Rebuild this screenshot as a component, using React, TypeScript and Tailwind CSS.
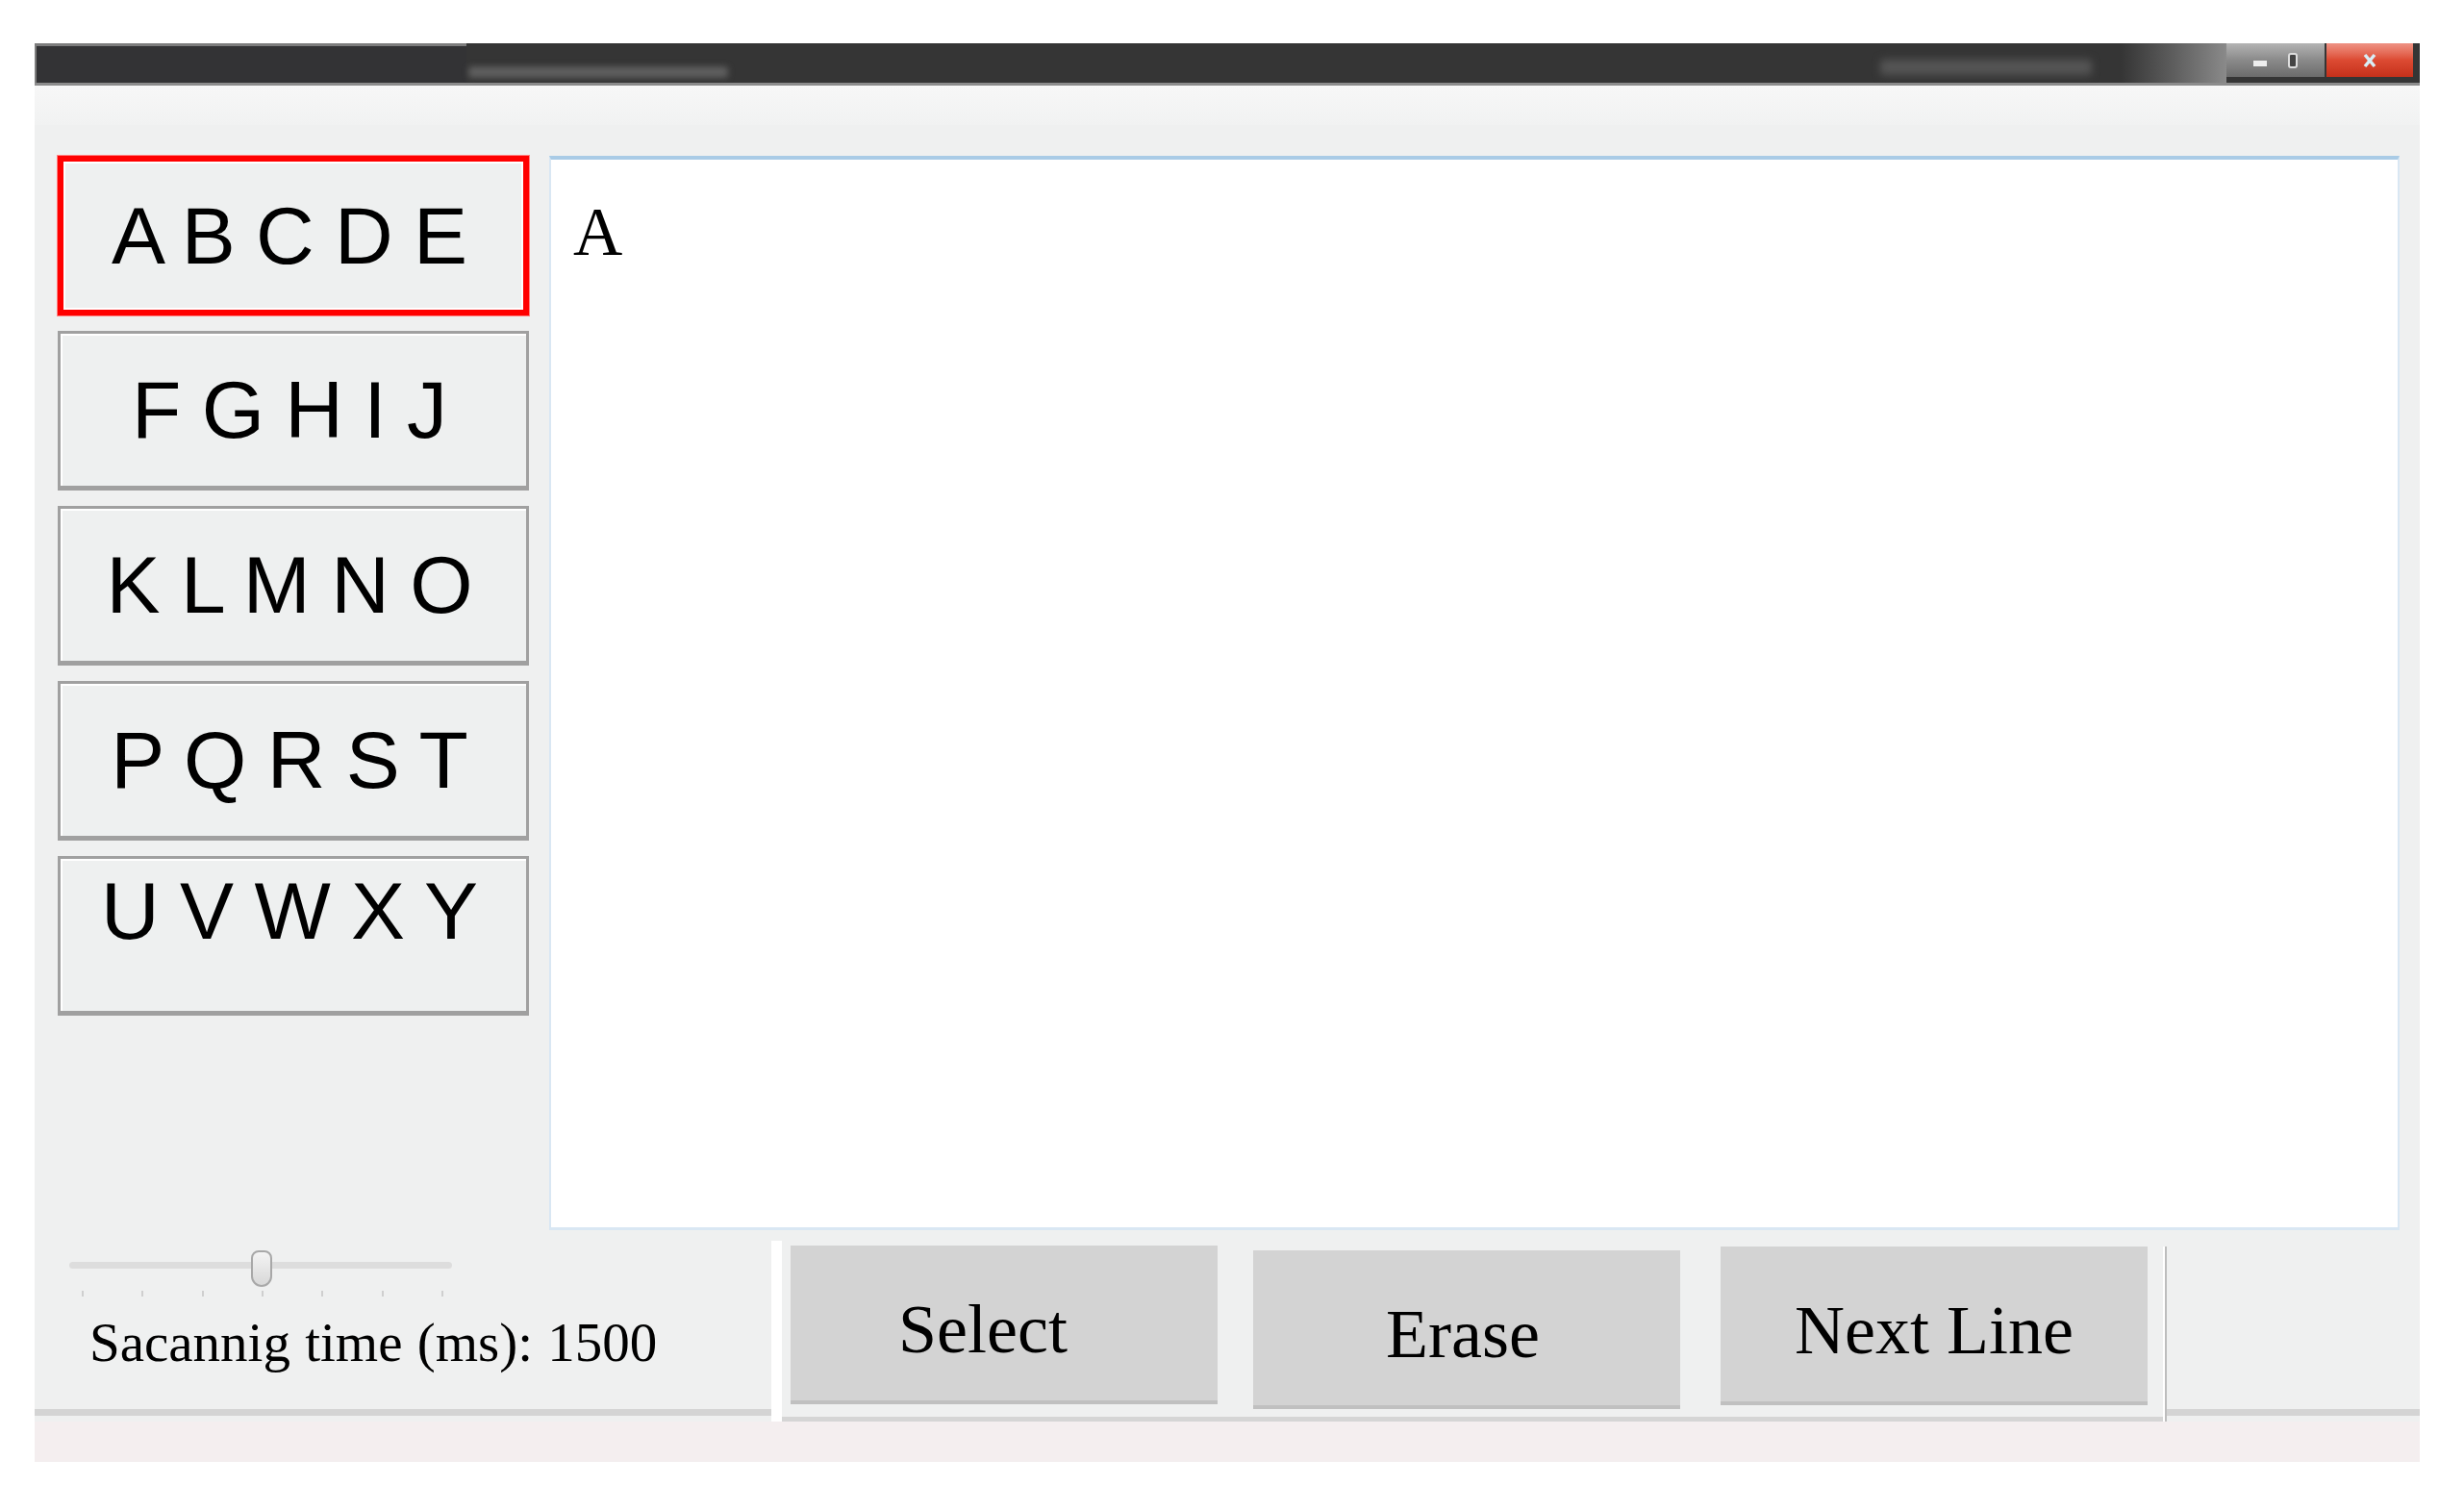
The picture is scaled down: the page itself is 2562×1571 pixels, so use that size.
import React from "react";

const rows = ["A B C D E", "F G H I J", "K L M N O", "P Q R S T", "U V W X Y"];
const ticks = [0, 1, 2, 3, 4, 5, 6];

function TitleBar() {
  return (
    <div className="flex h-[44px] border-b-[3px] border-[#8c8c8c] bg-[#353535]">
      <div className="h-full w-[449px] border-l-2 border-t-[3px] border-[#7d7d7d] bg-[#333335]" />
      <div className="ml-[2px] mt-[24px] h-[12px] w-[270px] rounded-sm bg-[#5e5e5e] blur-[3px]" />
      <div className="flex-1" />
      <div className="mr-[30px] mt-[17px] h-[16px] w-[220px] rounded-sm bg-[#555] blur-[4px]" />
      <div className="h-full w-[110px] bg-gradient-to-r from-[#353535] to-[#8a8a8a]" />
      <div className="flex h-[35px] w-[102px] items-center justify-center gap-[22px] bg-gradient-to-b from-[#b4b4b4] via-[#8a8a8a] to-[#6c6c6c]">
        <div className="mt-[6px] h-[6px] w-[14px] bg-[#eeeeee]" />
        <div className="h-[16px] w-[10px] rounded-[3px] border-2 border-[#dddddd] bg-[#444]" />
      </div>
      <div className="ml-[2px] flex h-[35px] w-[90px] items-center justify-center bg-gradient-to-b from-[#ee9284] via-[#dc4a32] to-[#c5301a]">
        <svg width="14" height="16" viewBox="0 0 14 16">
          <path d="M2 2 L12 14 M12 2 L2 14" stroke="#d8eef6" strokeWidth="3.5" />
        </svg>
      </div>
      <div className="w-[7px]" />
    </div>
  );
}

function LetterBox({ text, active, top }: { text: string; active: boolean; top?: boolean }) {
  return (
    <div
      className={`flex h-[166px] w-[490px] justify-center bg-[#eef0f0] pr-[8px] font-['Liberation_Sans',Arial,sans-serif] text-[84px] leading-none text-black [word-spacing:-2px] ${
        top ? "items-start pt-[12px]" : "items-center"
      } ${
        active
          ? "border-[6px] border-[#ff0000] shadow-[0_0_0_1px_#ff8080,inset_0_0_0_2px_#ffffff]"
          : "border-[3px] border-[#a0a0a0] border-b-[5px] shadow-[inset_2px_2px_0_#ffffff]"
      }`}>
      <span className="whitespace-pre">{text}</span>
    </div>
  );
}

function ActionButton({ label, mt, extra }: { label: string; mt: string; extra?: string }) {
  return (
    <div
      className={`flex h-[165px] w-[444px] items-center justify-center border-b-[4px] border-[#c0c0c0] bg-[#d3d3d3] pt-[12px] font-['Liberation_Serif','Times_New_Roman',serif] text-[72px] leading-none text-black ${mt} ${extra ?? ""}`}>
      {label}
    </div>
  );
}

export default function App() {
  return (
    <div className="h-[1571px] w-[2562px] bg-white pl-[36px] pt-[45px]">
      <div className="flex w-[2480px] flex-col">
        <TitleBar />
        <div className="h-[41px] bg-gradient-to-b from-[#f7f7f7] to-[#f1f2f2]" />
        <div className="flex flex-col bg-[#eff0f0]">
          {/* letters + text */}
          <div className="flex gap-[21px] pl-[24px] pt-[32px]">
            <div className="flex flex-col gap-[16px]">
              {rows.map((r, i) => (
                <LetterBox key={r} text={r} active={i === 0} top={i === 4} />
              ))}
            </div>
            <div className="h-[1117px] w-[1924px] border-x-2 border-b-[3px] border-[#d9e7f3] border-t-[4px] border-t-[#a9cbe6] bg-white pl-[23px] pt-[40px] font-['Liberation_Serif','Times_New_Roman',serif] text-[71px] leading-none text-black">
              A
            </div>
          </div>
          {/* bottom controls */}
          <div className="flex h-[199px]">
            <div className="mb-[6px] flex w-[766px] flex-col border-b-[7px] border-[#d4d4d4]">
              <div className="relative ml-[36px] mt-[21px] h-[38px] w-[398px]">
                <div className="mt-[12px] h-[7px] w-full rounded-full bg-[#dddddd]" />
                <div className="absolute left-[189px] top-0 h-[38px] w-[22px] rounded-t-[8px] rounded-b-[11px] border-2 border-[#a8a8a8] bg-gradient-to-b from-[#f4f4f4] to-[#d8d8d8]" />
              </div>
              <div className="ml-[49px] mt-[4px] flex h-[6px] w-[376px] justify-between">
                {ticks.map((t) => (
                  <div key={t} className="h-full w-[2px] bg-[#cfcfcf]" />
                ))}
              </div>
              <div className="ml-[57px] mt-[19px] font-['Liberation_Serif','Times_New_Roman',serif] text-[57px] leading-none text-black [word-spacing:1px]">
                Sacannig time (ms): 1500
              </div>
            </div>
            <div className="mt-[11px] w-[11px] bg-white" />
            <div className="flex w-[1436px] items-start border-b-[5px] border-[#d5d5d5] pl-[9px]">
              <ActionButton label="Select" mt="mt-[16px]" extra="pr-[44px]" />
              <ActionButton label="Erase" mt="mt-[21px] ml-[37px] h-[163px]" extra="pr-[8px]" />
              <ActionButton label="Next Line" mt="mt-[17px] ml-[42px] h-[163px]" />
            </div>
            <div className="mt-[17px] w-[4px] border-l-2 border-white bg-[#bdbdbd]" />
            <div className="mb-[6px] flex-1 border-b-[7px] border-[#d4d4d4]" />
          </div>
        </div>
        <div className="h-[42px] bg-[#f4eeef]" />
      </div>
    </div>
  );
}
